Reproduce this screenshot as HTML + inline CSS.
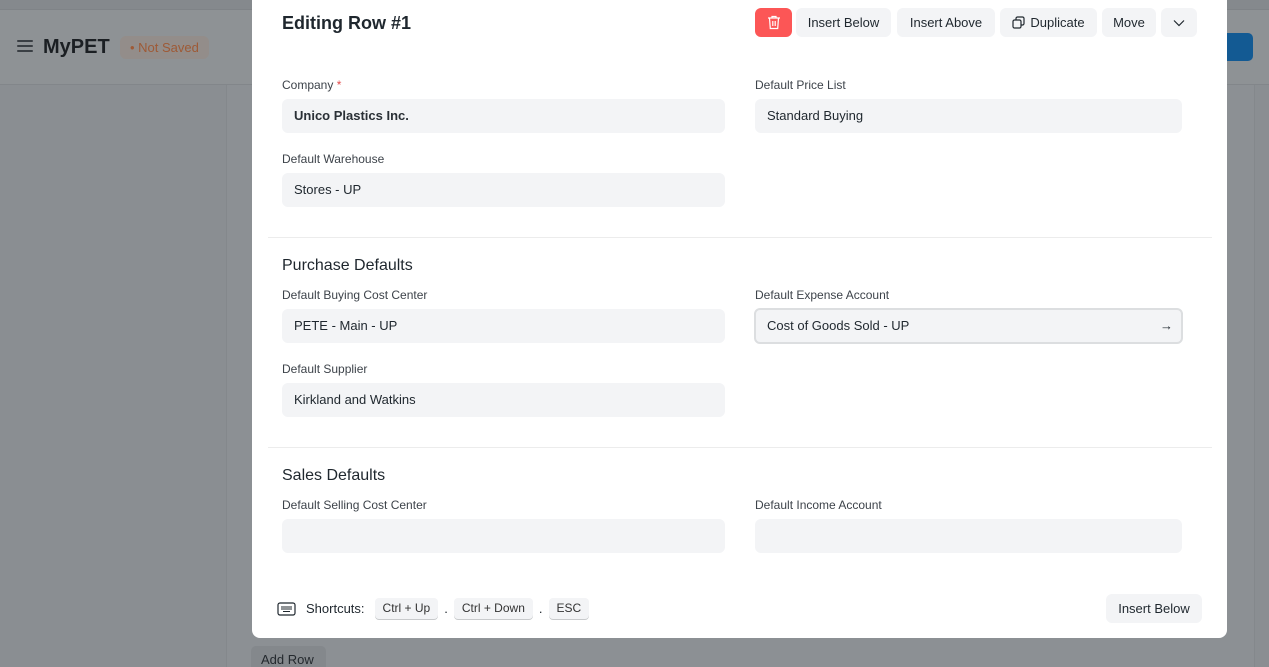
<!DOCTYPE html>
<html><head><style>
*{box-sizing:border-box;margin:0;padding:0}
html,body{width:1269px;height:667px;overflow:hidden}
body{background:#8a8e92;font-family:"Liberation Sans",sans-serif;position:relative;color:#1f272e}
.topbar{position:absolute;left:0;top:0;width:1269px;height:10px;background:#85898d;border-bottom:1px solid #7f8387}
.hdr{position:absolute;left:0;top:10px;width:1269px;height:75px;background:#8e9295;border-bottom:1px solid #82868a}
.cont{position:absolute;left:226px;top:85px;width:1029px;height:582px;background:#8c9094;border-left:1px solid #84888c;border-right:1px solid #84888c}
.ham{position:absolute;left:17px;top:40px;width:16px}
.ham i{display:block;height:2px;background:#3a3f44;margin-bottom:3px;border-radius:1px}
.logo{position:absolute;left:43px;top:36px;font-size:20px;font-weight:bold;color:#1b1f23}
.ns{position:absolute;left:120px;top:36px;height:23px;padding:0 10px;background:#938d8a;border-radius:6px;color:#9e5a36;font-size:13px;line-height:23px}
.blue{position:absolute;left:1200px;top:33px;width:53px;height:28px;background:#135a93;border-radius:5px}
.addrow{position:absolute;left:251px;top:646px;width:75px;height:30px;background:#84888c;border-radius:5px;font-size:13px;color:#24292e;padding:6px 10px}
.modal{position:absolute;left:252px;top:-10px;width:975px;height:648px;background:#fff;border-radius:8px}
.title{position:absolute;left:30px;font-size:18px;font-weight:bold;color:#1f272e}
.btn{position:absolute;top:18px;height:29px;background:#f3f4f6;border-radius:6px;font-size:13px;color:#1f272e;line-height:29px;text-align:center}
.lbl{position:absolute;font-size:12px;color:#3d434a}
.inp{position:absolute;width:443px;height:34px;background:#f3f4f6;border-radius:6px;font-size:13px;padding-left:12px;line-height:34px;color:#1f272e}
.sec{position:absolute;left:30px;font-size:16px;color:#1f272e}
.hr{position:absolute;left:16px;width:944px;height:1px;background:#ececec}
.kbd{display:inline-block;height:21px;padding:0 8px;background:#f3f4f6;border-radius:4px;box-shadow:0 1px 0 #c8cacc;font-size:12px;line-height:21px;color:#333}
</style></head><body>
<div class="topbar"></div>
<div class="hdr"></div>
<div class="cont"></div>
<div class="ham"><i></i><i></i><i></i></div>
<div class="logo">MyPET</div>
<div class="ns">• Not Saved</div>
<div class="blue"></div>
<div class="addrow">Add Row</div>
<div class="modal">
 <div class="title" style="top:23px">Editing Row #1</div>
 <div class="btn" style="left:503px;width:37px;background:#fc5656">
  <svg width="14" height="15" viewBox="0 0 14 15" style="margin-top:7px" fill="none" stroke="#fff" stroke-width="1.2"><path d="M1 3h12M5 3V1.5h4V3M2.5 3l.8 10.5h7.4L11.5 3M5.8 6v5M8.2 6v5"/></svg>
 </div>
 <div class="btn" style="left:544px;width:95px">Insert Below</div>
 <div class="btn" style="left:645px;width:98px">Insert Above</div>
 <div class="btn" style="left:748px;width:97px"><svg width="13" height="13" viewBox="0 0 13 13" style="vertical-align:-2px;margin-right:5px" fill="none" stroke="#1f272e" stroke-width="1.2"><rect x="1" y="4" width="8" height="8" rx="1.5"/><path d="M4 4V2.5A1.5 1.5 0 0 1 5.5 1h5A1.5 1.5 0 0 1 12 2.5v5A1.5 1.5 0 0 1 10.5 9H9"/></svg>Duplicate</div>
 <div class="btn" style="left:850px;width:54px">Move</div>
 <div class="btn" style="left:909px;width:36px"><svg width="12" height="8" viewBox="0 0 12 8" fill="none" stroke="#1f272e" stroke-width="1.2"><path d="M1 1.5l5 5 5-5"/></svg></div>

 <div class="lbl" style="left:30px;top:88px">Company <span style="color:#e24c4c">*</span></div>
 <div class="inp" style="left:30px;top:109px;font-weight:bold;color:#2a3036">Unico Plastics Inc.</div>
 <div class="lbl" style="left:503px;top:88px">Default Price List</div>
 <div class="inp" style="left:503px;top:109px;width:427px">Standard Buying</div>
 <div class="lbl" style="left:30px;top:162px">Default Warehouse</div>
 <div class="inp" style="left:30px;top:183px">Stores - UP</div>
 <div class="hr" style="top:247px"></div>

 <div class="sec" style="top:267px">Purchase Defaults</div>
 <div class="lbl" style="left:30px;top:298px">Default Buying Cost Center</div>
 <div class="inp" style="left:30px;top:319px">PETE - Main - UP</div>
 <div class="lbl" style="left:503px;top:298px">Default Expense Account</div>
 <div class="inp" style="left:502px;top:318px;width:429px;height:36px;border:2px solid #dcdee0;padding-left:11px;line-height:32px">Cost of Goods Sold - UP<span style="position:absolute;right:8px;top:0;font-size:13px">→</span></div>
 <div class="lbl" style="left:30px;top:372px">Default Supplier</div>
 <div class="inp" style="left:30px;top:393px">Kirkland and Watkins</div>
 <div class="hr" style="top:457px"></div>

 <div class="sec" style="top:477px">Sales Defaults</div>
 <div class="lbl" style="left:30px;top:508px">Default Selling Cost Center</div>
 <div class="inp" style="left:30px;top:529px"></div>
 <div class="lbl" style="left:503px;top:508px">Default Income Account</div>
 <div class="inp" style="left:503px;top:529px;width:427px"></div>

 <div style="position:absolute;left:25px;top:608px;font-size:13px;color:#1f272e;display:flex;align-items:center;gap:6px">
  <svg width="19" height="14" viewBox="0 0 19 14" fill="none" stroke="#1f272e" stroke-width="1.2"><rect x="1" y="1" width="17" height="12" rx="2"/><path d="M4 5h11M4 7h11M6 9.5h7" stroke-width="1"/></svg>
  <span style="margin-left:4px;margin-right:4px">Shortcuts:</span>
  <span class="kbd">Ctrl + Up</span><span>.</span><span class="kbd">Ctrl + Down</span><span>.</span><span class="kbd">ESC</span>
 </div>
 <div class="btn" style="left:854px;top:604px;width:96px">Insert Below</div>
</div>
</body></html>
